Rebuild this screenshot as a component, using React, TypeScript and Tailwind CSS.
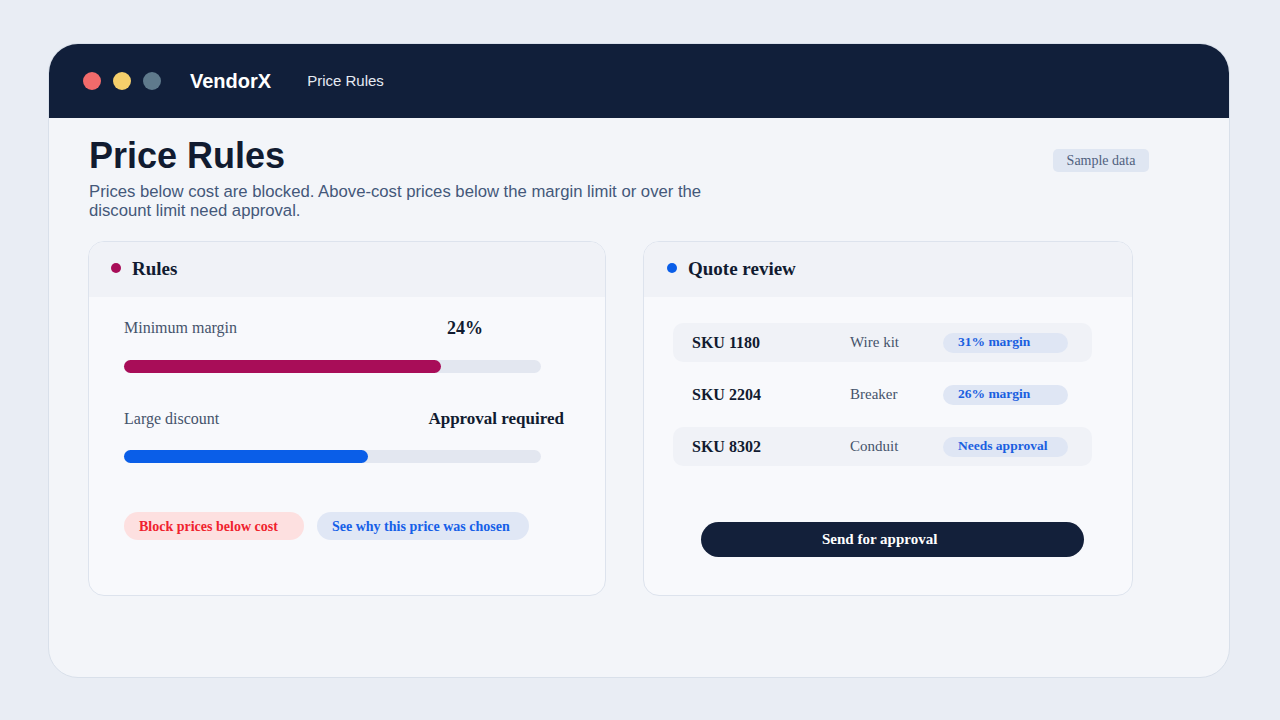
import React from "react";

const serif = { fontFamily: '"Liberation Serif", "Times New Roman", serif' };

function Bar({ pct, color }: { pct: number; color: string }) {
  return (
    <div className="w-[417px] h-[13px] rounded-full bg-[#e3e7f0]">
      <div className={`h-[13px] rounded-full ${color}`} style={{ width: `${pct}%` }} />
    </div>
  );
}

function Row({ sku, name, badge, shaded }: { sku: string; name: string; badge: string; shaded: boolean }) {
  return (
    <div className={`h-[39px] rounded-[10px] flex items-center pl-[19px] ${shaded ? "bg-[#f0f2f7]" : ""}`}>
      <div className="w-[158px] text-[16px] font-bold text-[#111b30]">{sku}</div>
      <div className="w-[93px] text-[15px] text-[#45536b]">{name}</div>
      <div className="w-[125px] h-[20px] rounded-full bg-[#dfe6f4] flex items-center pl-[15px] text-[13.5px] font-bold text-[#1a5fe0]">
        {badge}
      </div>
    </div>
  );
}

export default function App() {
  return (
    <div
      className="w-[1280px] h-[720px] bg-[#e9edf4] pt-[43px] pl-[48px]"
      style={{ fontFamily: '"Liberation Sans", Arial, sans-serif' }}
    >
      <div className="w-[1182px] h-[635px] rounded-[30px] overflow-hidden bg-[#f3f5f9] border border-[#d9e0ea]">
        <div className="h-[74px] bg-[#111f3a] flex items-center pl-[34px]">
          <div className="flex gap-[12px]">
            <div className="w-[18px] h-[18px] rounded-full bg-[#f26b6b]" />
            <div className="w-[18px] h-[18px] rounded-full bg-[#f5cf6b]" />
            <div className="w-[18px] h-[18px] rounded-full bg-[#5f7a8c]" />
          </div>
          <div className="ml-[29px] text-white font-bold text-[20px]">VendorX</div>
          <div className="ml-[36px] text-[#e6ebf3] text-[15px]">Price Rules</div>
        </div>

        <div className="pl-[39px] pr-[80px] pt-[18px] relative">
          <div className="flex justify-between items-start">
            <div className="pl-[1px]">
              <h1 className="text-[36px] leading-[40px] font-bold text-[#111b30]">Price Rules</h1>
              <p className="mt-[6px] text-[16.7px] leading-[19px] text-[#44587a] w-[660px]">
                Prices below cost are blocked. Above-cost prices below the margin limit or over the discount limit need approval.
              </p>
            </div>
            <div
              className="mt-[13px] w-[96px] h-[23px] rounded-[5px] bg-[#dfe6f2] flex items-center justify-center text-[14px] text-[#50617e]"
              style={serif}
            >
              Sample data
            </div>
          </div>

          <div className="mt-[21px] flex gap-[37px]" style={serif}>
            <div className="w-[518px] h-[355px] rounded-[16px] border border-[#dde3ed] bg-[#f8f9fc] overflow-hidden">
              <div className="h-[55px] bg-[#f0f2f7] flex items-center pl-[22px]">
                <div className="w-[10px] h-[10px] rounded-full bg-[#a80d58] -mt-[3px]" />
                <div className="ml-[11px] text-[19px] font-bold text-[#111b30]">Rules</div>
              </div>
              <div className="pl-[35px] pt-[19px]">
                <div className="flex items-center h-[24px]">
                  <div className="w-[323px] text-[16px] text-[#45536b]">Minimum margin</div>
                  <div className="text-[18px] font-bold text-[#111b30]">24%</div>
                </div>
                <div className="mt-[20px]">
                  <Bar pct={76} color="bg-[#a80d58]" />
                </div>
                <div className="mt-[34px] flex items-center justify-between w-[440px] h-[24px]">
                  <div className="text-[16px] text-[#45536b]">Large discount</div>
                  <div className="text-[17px] font-bold text-[#111b30]">Approval required</div>
                </div>
                <div className="mt-[19px]">
                  <Bar pct={58.5} color="bg-[#0a5ee8]" />
                </div>
                <div className="mt-[49px] flex gap-[13px]">
                  <div className="w-[180px] h-[28px] rounded-full bg-[#fde0e0] flex items-center pl-[15px] text-[14px] font-bold text-[#f0222e]">
                    Block prices below cost
                  </div>
                  <div className="w-[212px] h-[28px] rounded-full bg-[#e0e7f5] flex items-center pl-[15px] text-[14px] font-bold text-[#1660e8]">
                    See why this price was chosen
                  </div>
                </div>
              </div>
            </div>

            <div className="w-[490px] h-[355px] rounded-[16px] border border-[#dde3ed] bg-[#f8f9fc] overflow-hidden">
              <div className="h-[55px] bg-[#f0f2f7] flex items-center pl-[23px]">
                <div className="w-[10px] h-[10px] rounded-full bg-[#0a5ee8] -mt-[3px]" />
                <div className="ml-[11px] text-[19px] font-bold text-[#111b30]">Quote review</div>
              </div>
              <div className="pt-[26px] pl-[29px]">
                <div className="w-[419px] flex flex-col gap-[13px]">
                  <Row sku="SKU 1180" name="Wire kit" badge="31% margin" shaded />
                  <Row sku="SKU 2204" name="Breaker" badge="26% margin" shaded={false} />
                  <Row sku="SKU 8302" name="Conduit" badge="Needs approval" shaded />
                </div>
                <div className="mt-[56px] ml-[28px] w-[383px] h-[35px] rounded-full bg-[#13203a] flex items-center pl-[121px] text-[15px] font-bold text-white">
                  Send for approval
                </div>
              </div>
            </div>
          </div>
        </div>
      </div>
    </div>
  );
}
